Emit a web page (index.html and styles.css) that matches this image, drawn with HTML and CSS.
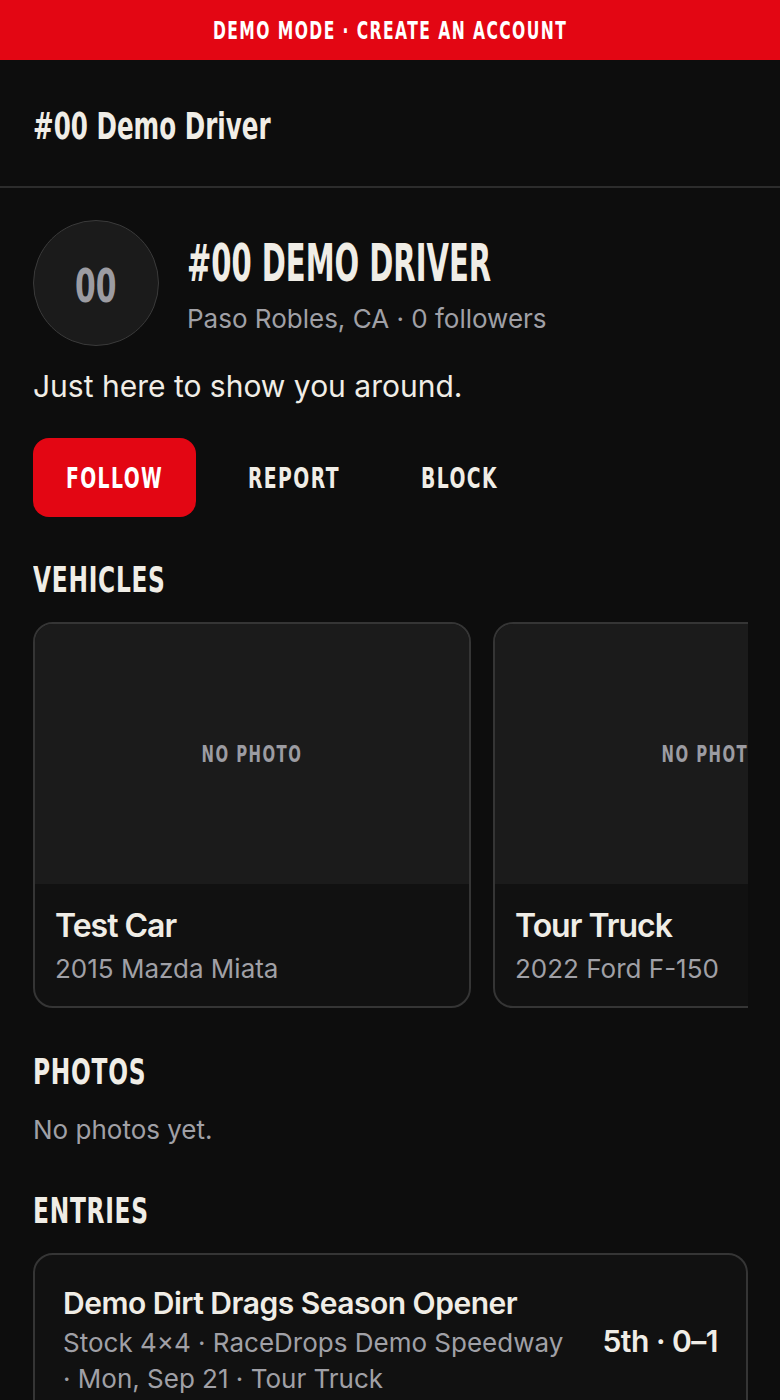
FILE: index.html
```html
<!DOCTYPE html>
<html lang="en">
<head>
    <meta charset="UTF-8">
    <meta name="viewport" content="width=device-width, initial-scale=1.0">
    <title>#00 Demo Driver</title>
    <link rel="stylesheet" href="styles.css">
</head>
<body>

    <div class="demo-bar"><span class="cond">Demo mode · Create an account</span></div>

    <header class="top-bar">
        <h1><span class="cond">#00 Demo Driver</span></h1>
    </header>

    <main class="page">
        <section class="profile">
            <div class="avatar"><span class="cond">00</span></div>
            <div class="profile-info">
                <h2><span class="cond">#00 Demo Driver</span></h2>
                <p class="meta">Paso Robles, CA · 0 followers</p>
            </div>
        </section>

        <p class="bio">Just here to show you around.</p>

        <div class="actions">
            <button class="btn btn-primary"><span class="cond">Follow</span></button>
            <button class="btn"><span class="cond">Report</span></button>
            <button class="btn"><span class="cond">Block</span></button>
        </div>

        <h3 class="section-title"><span class="cond">Vehicles</span></h3>
        <div class="vehicle-row">
            <div class="vehicle-card">
                <div class="vehicle-photo"><span class="cond">No photo</span></div>
                <div class="vehicle-body">
                    <div class="vehicle-name">Test Car</div>
                    <div class="vehicle-sub">2015 Mazda Miata</div>
                </div>
            </div>
            <div class="vehicle-card">
                <div class="vehicle-photo"><span class="cond">No photo</span></div>
                <div class="vehicle-body">
                    <div class="vehicle-name">Tour Truck</div>
                    <div class="vehicle-sub">2022 Ford F-150</div>
                </div>
            </div>
        </div>

        <h3 class="section-title"><span class="cond">Photos</span></h3>
        <p class="empty">No photos yet.</p>

        <h3 class="section-title"><span class="cond">Entries</span></h3>
        <div class="entry-card">
            <div class="entry-info">
                <div class="entry-name">Demo Dirt Drags Season Opener</div>
                <div class="entry-sub">Stock 4×4 · RaceDrops Demo Speedway · Mon, Sep 21 · Tour Truck</div>
            </div>
            <div class="entry-result">5th · 0–1</div>
        </div>
    </main>

</body>
</html>
```

FILE: styles.css
```css
body {
    font-family: 'Inter', 'Noto Sans', sans-serif;
    margin: 0;
    padding: 0;
    background-color: #0d0d0d;
    color: #f0ede6;
}

/* narrow display type for headings and labels */
.demo-bar,
.top-bar h1,
.avatar,
.profile-info h2,
.btn,
.section-title,
.vehicle-photo {
    font-family: 'DejaVu Sans Condensed', 'DejaVu Sans', sans-serif;
    font-stretch: condensed;
    font-weight: bold;
}

.cond {
    display: inline-block;
    white-space: nowrap;
    transform: scaleX(0.72);
    transform-origin: left center;
}

.demo-bar {
    background-color: #e30613;
    color: white;
    height: 60px;
    line-height: 62px;
    text-align: center;
    font-size: 24px;
    letter-spacing: 2px;
    text-transform: uppercase;
}

.demo-bar .cond,
.avatar .cond,
.btn .cond,
.vehicle-photo .cond {
    transform-origin: center center;
}

.top-bar {
    height: 126px;
    padding: 0 33px;
    display: flex;
    align-items: center;
    border-bottom: 2px solid #2c2c2c;
}

.top-bar h1 {
    margin: 6px 0 0;
    font-size: 38px;
}

.page {
    padding: 32px 32px 40px 33px;
}

.profile {
    display: flex;
    align-items: center;
    gap: 28px;
}

.avatar {
    width: 124px;
    height: 124px;
    flex-shrink: 0;
    box-sizing: content-box;
    border-radius: 50%;
    background-color: #1b1b1b;
    border: 1px solid #3a3a3a;
    display: flex;
    align-items: center;
    justify-content: center;
    color: #9c9ca2;
    font-size: 46px;
    padding-top: 0;
}

.avatar .cond {
    margin-top: 6px;
}

.profile-info h2 {
    margin: 0 0 10px;
    font-size: 52px;
    line-height: 60px;
    text-transform: uppercase;
}

.profile-info h2 .cond {
    transform: scaleX(0.62);
}

.meta {
    margin: 0;
    color: #a0a0a6;
    font-size: 26px;
}

.bio {
    margin: 22px 0 34px;
    font-size: 30px;
}

.actions {
    display: flex;
    gap: 20px;
    margin-bottom: 43px;
}

.btn {
    height: 79px;
    padding: 0 14px;
    background: none;
    border: none;
    border-radius: 16px;
    color: #f0ede6;
    font-size: 29px;
    letter-spacing: 2px;
    text-transform: uppercase;
    cursor: pointer;
}

.btn-primary {
    background-color: #e30613;
    color: white;
}

.section-title {
    margin: 0 0 22px;
    font-size: 36px;
    line-height: 40px;
    letter-spacing: 1px;
    text-transform: uppercase;
}

.vehicle-row {
    display: flex;
    gap: 22px;
    overflow: hidden;
    margin-bottom: 44px;
}

.vehicle-card {
    flex: 0 0 438px;
    box-sizing: border-box;
    border: 2px solid #353535;
    border-radius: 20px;
    overflow: hidden;
    background-color: #111111;
}

.vehicle-photo {
    height: 260px;
    background-color: #1b1b1b;
    display: flex;
    align-items: center;
    justify-content: center;
    color: #9c9ca2;
    font-size: 23px;
    letter-spacing: 2px;
    text-transform: uppercase;
}

.vehicle-body {
    padding: 22px 20px 22px;
}

.vehicle-name {
    font-size: 32px;
    font-weight: 600;
    letter-spacing: -1px;
    margin-bottom: 8px;
}

.vehicle-sub {
    color: #a0a0a6;
    font-size: 26px;
}

.empty {
    margin: 0 0 46px;
    color: #a0a0a6;
    font-size: 26px;
}

.entry-card {
    display: flex;
    align-items: center;
    gap: 36px;
    padding: 30px 28px;
    border: 2px solid #353535;
    border-radius: 20px;
    background-color: #111111;
}

.entry-name {
    font-size: 30px;
    font-weight: 600;
    letter-spacing: -0.5px;
    margin-bottom: 4px;
}

.entry-sub {
    color: #a0a0a6;
    font-size: 26px;
    line-height: 36px;
}

.entry-result {
    flex-shrink: 0;
    font-size: 30px;
    font-weight: 600;
    letter-spacing: -0.5px;
}
```
